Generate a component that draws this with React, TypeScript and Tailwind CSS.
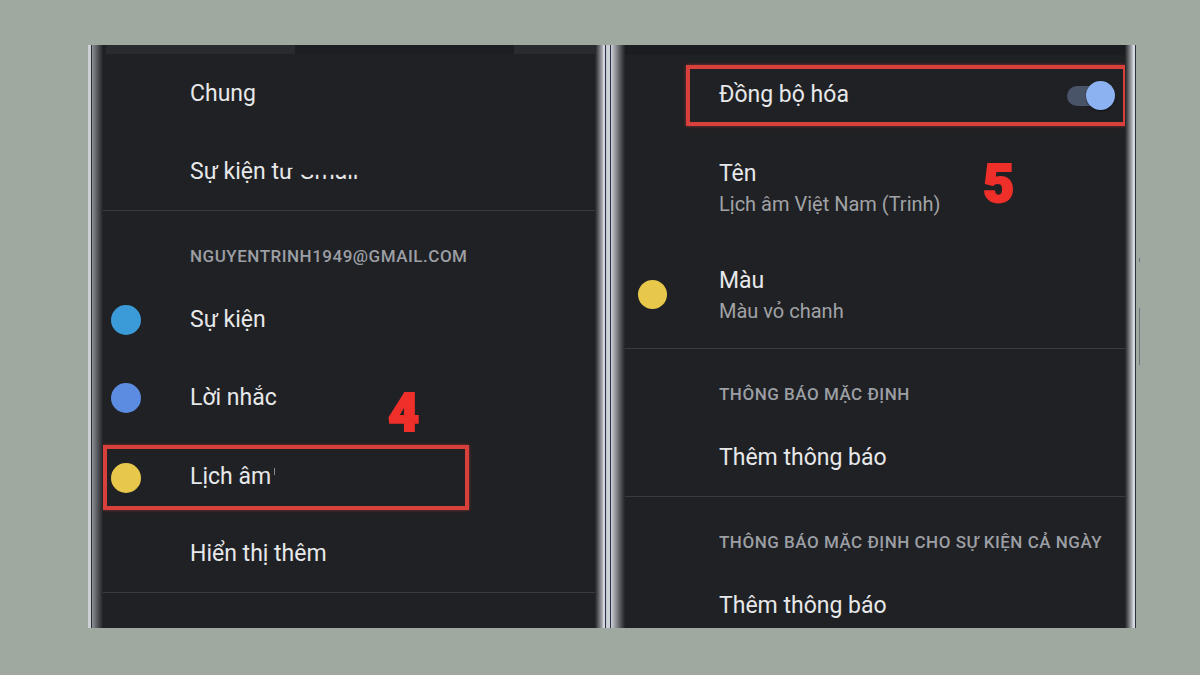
import type { ReactNode } from 'react'

function Dot({ color }: { color: string }) {
  return <div className={`w-[30px] h-[30px] rounded-full flex-shrink-0 ${color}`} />
}

function Divider() {
  return <div className="h-px bg-[#3a3b3f] flex-shrink-0" />
}

function Header({ children, pl }: { children: ReactNode; pl: string }) {
  return (
    <div className={`h-[69px] pt-[34px] flex-shrink-0 ${pl}`}>
      <div className="text-[17px] leading-[22px] font-medium tracking-[0.03em] text-[#9c9fa4] whitespace-nowrap">
        {children}
      </div>
    </div>
  )
}

function LeftRow({ dot, children }: { dot?: string; children: ReactNode }) {
  return (
    <div className="h-[78px] flex items-center pl-[8px] pt-[2px] flex-shrink-0">
      <div className="w-[79px] flex-shrink-0">{dot && <Dot color={dot} />}</div>
      <div className="text-[23px] text-[#e7e8ea] whitespace-nowrap">{children}</div>
    </div>
  )
}

function Annotation({ n, pos }: { n: string; pos: string }) {
  return (
    <div
      className={`absolute text-[54px] leading-none font-black text-[#ef2f2a] [-webkit-text-stroke:2px_#ef2f2a] ${pos}`}
    >
      {n}
    </div>
  )
}

function LeftPhone() {
  return (
    <div className="w-[519px] h-[583px] flex flex-shrink-0">
      {/* left bezel */}
      <div className="w-[3px] bg-[#cdd0d6]" />
      <div className="w-px bg-[#2b2e35]" />
      <div className="w-[11px] bg-gradient-to-r from-[#8d9096] to-[#222326]" />

      <div className="flex-1 bg-[#202124] flex flex-col overflow-hidden">
        {/* status strip */}
        <div className="h-[9px] flex flex-shrink-0">
          <div className="w-[3px]" />
          <div className="w-[189px] bg-[#2a2b2f]" />
          <div className="w-[219px] bg-[#1d1e21]" />
          <div className="flex-1 bg-[#2a2b2f]" />
        </div>

        <LeftRow>Chung</LeftRow>
        <LeftRow>
          Sự kiện t<span className="inline-block [clip-path:inset(38%_0_0_0)]">ừ</span>{' '}
          <span className="inline-block [clip-path:inset(58%_0_0_0)]">Gmail</span>
        </LeftRow>
        <Divider />
        <Header pl="pl-[87px]">NGUYENTRINH1949@GMAIL.COM</Header>
        <LeftRow dot="bg-[#3b9bd8]">Sự kiện</LeftRow>
        <div className="relative">
          <LeftRow dot="bg-[#5b8ce2]">Lời nhắc</LeftRow>
          <Annotation n="4" pos="left-[285px] top-[28px]" />
        </div>

        {/* highlighted row */}
        <div className="h-[78px] pt-[9px] pb-[4px] flex-shrink-0">
          <div className="w-[366px] h-full border-[4px] border-[#d8403b] flex items-center pl-[4px] shadow-[0_0_3px_rgba(216,64,59,0.6)]">
            <div className="w-[79px] flex-shrink-0">
              <Dot color="bg-[#e8c84b]" />
            </div>
            <div className="text-[23px] text-[#e7e8ea] whitespace-nowrap">Lịch âm</div>
            <div className="w-px h-[7px] bg-[#8a8b8e] ml-[3px] mb-[12px]" />
          </div>
        </div>

        <LeftRow>Hiển thị thêm</LeftRow>
        <Divider />
      </div>

      {/* right bezel */}
      <div className="w-[8px] bg-gradient-to-r from-[#222326] to-[#b6b9bf]" />
      <div className="w-[2px] bg-[#d3d6db]" />
      <div className="w-px bg-[#26304a]" />
      <div className="w-px bg-[#c3c7cd]" />
    </div>
  )
}

function RightTitle({ title, sub }: { title: string; sub: string }) {
  return (
    <div className="flex flex-col whitespace-nowrap">
      <div className="text-[23px] leading-[31px] text-[#e7e8ea]">{title}</div>
      <div className="text-[20px] leading-[31px] text-[#a1a3a7]">{sub}</div>
    </div>
  )
}

function RightPhone() {
  return (
    <div className="w-[533px] h-[583px] flex flex-shrink-0">
      {/* left bezel */}
      <div className="w-[3px] bg-[#cdd1d6]" />
      <div className="w-px bg-[#26304a]" />
      <div className="w-[14px] bg-gradient-to-r from-[#cfd2d7] to-[#222326]" />

      <div className="flex-1 bg-[#202124] flex flex-col overflow-hidden">
        <div className="h-[10px] bg-[#1c1d20] flex-shrink-0" />

        {/* sync row, highlighted */}
        <div className="h-[78px] pt-[10px] pb-[7px] pl-[61px] flex-shrink-0">
          <div className="h-full mr-[-2px] border-[4px] border-[#d8403b] flex items-center pl-[29px] pr-[8px] shadow-[0_0_3px_rgba(216,64,59,0.6)]">
            <div className="text-[23px] text-[#e7e8ea] whitespace-nowrap">Đồng bộ hóa</div>
            <div className="ml-auto flex items-center">
              <div className="w-[36px] h-[20px] rounded-full bg-[#4a5468] -mr-[17px]" />
              <div className="w-[29px] h-[29px] rounded-full bg-[#8cb2f2] shadow-[0_1px_2px_rgba(0,0,0,0.5)]" />
            </div>
          </div>
        </div>

        <div className="h-[108px] pl-[94px] pt-[25px] relative flex-shrink-0">
          <RightTitle title="Tên" sub="Lịch âm Việt Nam (Trinh)" />
          <Annotation n="5" pos="left-[358px] top-[24px]" />
        </div>

        <div className="h-[107px] flex items-center pl-[13px] flex-shrink-0">
          <div className="w-[81px] flex-shrink-0">
            <div className="w-[29px] h-[29px] rounded-full bg-[#e8c84b]" />
          </div>
          <div className="pt-[3px]">
            <RightTitle title="Màu" sub="Màu vỏ chanh" />
          </div>
        </div>
        <Divider />

        <Header pl="pl-[94px]">THÔNG BÁO MẶC ĐỊNH</Header>
        <div className="h-[78px] flex items-center pl-[94px] pt-[2px] flex-shrink-0">
          <div className="text-[23px] text-[#e7e8ea] whitespace-nowrap">Thêm thông báo</div>
        </div>
        <Divider />

        <Header pl="pl-[94px]">THÔNG BÁO MẶC ĐỊNH CHO SỰ KIỆN CẢ NGÀY</Header>
        <div className="h-[78px] flex items-center pl-[94px] pt-[2px] flex-shrink-0">
          <div className="text-[23px] text-[#e7e8ea] whitespace-nowrap">Thêm thông báo</div>
        </div>
      </div>

      {/* right bezel */}
      <div className="w-[8px] bg-gradient-to-r from-[#222326] to-[#c6cad0]" />
      <div className="w-[2px] bg-[#d6d9de]" />
      <div className="w-px bg-[#2a3040]" />
      <div className="w-[4px] flex flex-col items-end">
        <div className="h-[213px]" />
        <div className="w-px h-[4px] bg-[#6d7480]" />
        <div className="h-[46px]" />
        <div className="w-px h-[57px] bg-[#6d7480]" />
      </div>
    </div>
  )
}

export default function App() {
  return (
    <div className="w-[1200px] h-[675px] bg-[#9fa99f] pt-[45px] pl-[88px] flex items-start overflow-hidden font-['Roboto','Liberation_Sans',sans-serif]">
      <LeftPhone />
      <RightPhone />
    </div>
  )
}
